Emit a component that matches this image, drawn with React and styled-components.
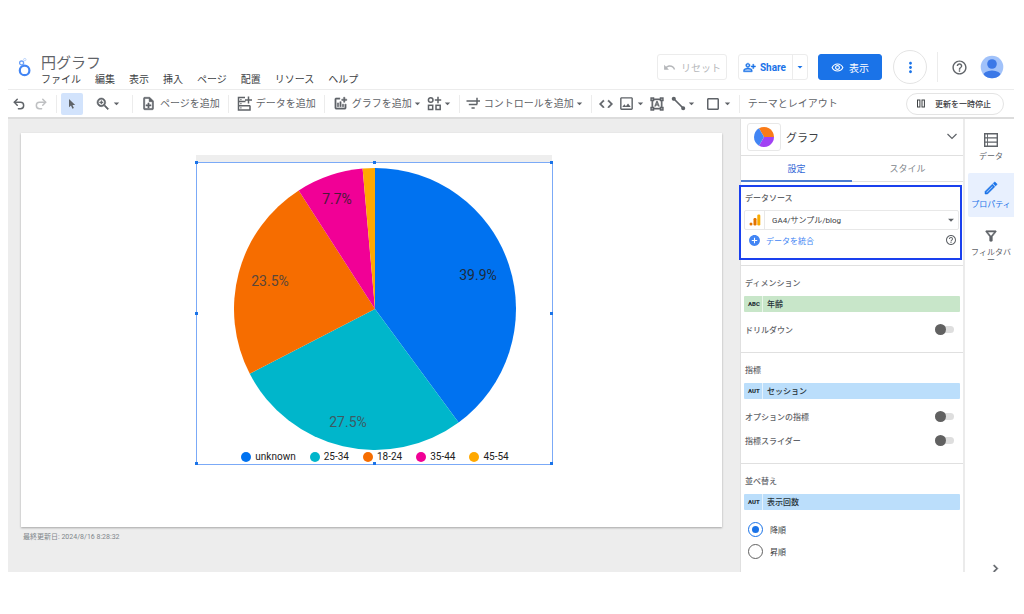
import React, { useState } from 'react'
import styled, { createGlobalStyle } from 'styled-components'
import { Undo2, Redo2 } from 'lucide-react'
import {
  MdAddCircle,
  MdArrowDropDown,
  MdChevronRight,
  MdCode,
  MdCropSquare,
  MdFormatShapes,
  MdHelpOutline,
  MdMoreVert,
  MdOutlineAddchart,
  MdOutlineFilterAlt,
  MdOutlineImage,
  MdOutlineModeEdit,
  MdOutlineNoteAdd,
  MdOutlinePersonAddAlt,
  MdOutlineRemoveRedEye,
  MdUndo,
  MdZoomIn,
} from 'react-icons/md'

const GlobalStyle = createGlobalStyle`
    * {
        box-sizing: border-box;
    }
    body {
        margin: 0;
        background: #fff;
        color: #5f6368;
        font-family: Roboto, "Noto Sans CJK JP", sans-serif;
        font-size: 8px;
    }
    button, select, input {
        margin: 0;
        font-family: inherit;
        color: inherit;
    }
    button {
        padding: 0;
        border: 0;
        background: none;
        cursor: pointer;
    }
    svg {
        display: block;
        flex: none;
    }
    `;

const Page = styled.div`
    padding: 44px 10px 42px 8px;
    `;

/* ---------- header ---------- */

const Header = styled.header`
    display: flex;
    align-items: center;
    height: 46px;
    padding: 1px 10px 0 9px;
    border-bottom: 1px solid #ececec;
    `;

const Brand = styled.div`
    flex: 1;
    margin-left: 9px;
    padding-top: 7px;
    `;

const Title = styled.h1`
    margin: 0;
    font-size: 15px;
    line-height: 19px;
    font-weight: 400;
    `;

const Menu = styled.nav`
    display: flex;
    gap: 14px;
    `;

const MenuLink = styled.a`
    color: #3c4043;
    font-size: 10px;
    line-height: 14px;
    text-decoration: none;
    `;

const HeaderButton = styled.button`
    display: flex;
    align-items: center;
    justify-content: center;
    gap: 5px;
    width: ${props => props.$width};
    height: 26px;
    border: 1px solid ${props => props.$primary ? "#1a73e8" : "#ececec"};
    border-radius: 3px;
    background: ${props => props.$primary ? "#1a73e8" : "white"};
    color: ${props => props.$primary ? "white" : "#b5b7ba"};
    font-size: 10px;
    `;

const ShareGroup = styled.div`
    display: flex;
    height: 26px;
    margin: 0 10px 0 11px;
    border: 1px solid #ececec;
    border-radius: 3px;
    color: #1a73e8;
    `;

const ShareButton = styled.button`
    display: flex;
    align-items: center;
    gap: 4px;
    padding: 0 6px 0 4px;
    font-size: 10px;
    font-weight: 700;
    `;

const ShareMore = styled.button`
    padding: 0 1px;
    border-left: 1px solid #ececec;
    `;

const RoundButton = styled.button`
    display: grid;
    place-items: center;
    width: 34px;
    height: 34px;
    margin: 0 10px 0 11px;
    border: 1px solid #e4e4e4;
    border-radius: 50%;
    color: #1a73e8;
    `;

const HelpButton = styled.button`
    display: grid;
    place-items: center;
    width: 43px;
    height: 30px;
    border-left: 1px solid #ececec;
    `;

/* ---------- toolbar ---------- */

const Toolbar = styled.div`
    display: flex;
    align-items: center;
    height: 29px;
    padding-right: 10px;
    border-bottom: 2px solid #dcdcdc;
    `;

const Tool = styled.button`
    display: flex;
    align-items: center;
    gap: 4px;
    padding: 0 ${props => props.$pad || "2px"};
    font-size: 10px;
    line-height: 20px;
    white-space: nowrap;
    `;

const SquareTool = styled.button`
    display: grid;
    place-items: center;
    width: 22px;
    height: 22px;
    margin-right: ${props => props.$active ? "8px" : "0"};
    border-radius: 2px;
    background: ${props => props.$active ? "#d2e3fc" : "none"};
    opacity: ${props => props.disabled ? 0.4 : 1};
    `;

/* thickens the strokes of a filled icon */
const Bold = styled.span`
    path:not([fill="none"]) {
        stroke: currentColor;
        stroke-width: 0.8px;
    }
    `;

const Sep = styled.span`
    width: 1px;
    height: 18px;
    margin: 0 ${props => props.$tight ? "4px" : "6px"};
    background: #ececec;
    `;

const Caret = styled(MdArrowDropDown)`
    width: 13px;
    height: 13px;
    margin: 0 -1px 0 -5px;
    `;

const PauseButton = styled.button`
    display: flex;
    align-items: center;
    gap: 10px;
    height: 22px;
    margin-left: auto;
    padding: 0 12px 0 10px;
    border: 1px solid #e4e4e4;
    border-radius: 11px;
    color: #3c4043;
    font-size: 8px;
    font-weight: 500;
    `;

/* ---------- canvas ---------- */

const Workspace = styled.div`
    display: flex;
    `;

const Canvas = styled.main`
    flex: 1;
    padding: 14px 18px 0 13px;
    background: #ededed;
    `;

const Sheet = styled.section`
    padding: 22px 0 62px 175px;
    background: white;
    box-shadow: 0 1px 2px rgba(0, 0, 0, 0.3);
    `;

const ChartStrip = styled.div`
    width: 356px;
    height: 7px;
    background: #eee;
    `;

const ChartFrame = styled.figure`
    position: relative;
    display: flex;
    flex-direction: column;
    align-items: center;
    width: 357px;
    height: 303px;
    margin: 0;
    padding: 5px 0 0 1px;
    border: 1px solid #7baaf7;
    `;

const Handle = styled.span`
    position: absolute;
    left: ${props => props.$x};
    top: ${props => props.$y};
    width: 3px;
    height: 3px;
    margin: -2px;
    background: #1a73e8;
    `;

const Legend = styled.ul`
    display: flex;
    gap: 14px;
    margin: 1px 0 0;
    padding: 0;
    list-style: none;
    color: #212121;
    font-size: 10px;
    line-height: 12px;
    `;

const LegendItem = styled.li`
    display: flex;
    align-items: center;
    gap: 4px;
    &::before {
        content: "";
        width: 10px;
        height: 10px;
        border-radius: 50%;
        background: ${props => props.$color};
    }
    `;

const Updated = styled.p`
    margin: 4px 2px 0;
    color: #80868b;
    font-size: 7px;
    line-height: 12px;
    `;

/* ---------- property panel ---------- */

const Panel = styled.aside`
    width: 225px;
    padding-bottom: 10px;
    border-left: 1px solid #e0e0e0;
    border-right: 2px solid #ebebeb;
    `;

const PanelHead = styled.div`
    display: flex;
    align-items: center;
    gap: 5px;
    height: 37px;
    padding: 0 4px 0 6px;
    border-bottom: 1px solid #e0e0e0;
    `;

const ChartType = styled.button`
    display: grid;
    place-items: center;
    width: 34px;
    height: 28px;
    border: 1px solid #e8e8e8;
    border-radius: 3px;
    `;

const PanelTitle = styled.h2`
    flex: 1;
    margin: 0;
    color: #3c4043;
    font-size: 11px;
    font-weight: 400;
    `;

const Tabs = styled.div`
    display: grid;
    grid-template-columns: 1fr 1fr;
    height: 26px;
    border-bottom: 1px solid #e0e0e0;
    `;

const Tab = styled.button`
    height: 26px;
    border-bottom: 2px solid ${props => props.$active ? "#4a7bd0" : "transparent"};
    color: ${props => props.$active ? "#3367d6" : "#80868b"};
    font-size: 9px;
    `;

const SourceBox = styled.section`
    margin: 3px 1px 5px -2px;
    padding: 4px 1px 8px 3px;
    border: 2px solid #1a40ee;
    `;

const Section = styled.section`
    padding: 10px 3px ${props => props.$bottom};
    border-top: 1px solid #e0e0e0;
    `;

const Label = styled.h3`
    margin: 0 1px;
    font-size: 8px;
    line-height: 16px;
    font-weight: 500;
    `;

const SourceRow = styled.div`
    display: flex;
    align-items: center;
    height: 20px;
    margin-top: 3px;
    border: 1px solid #e8e8e8;
    border-radius: 2px;
    `;

const SourceIcon = styled.span`
    display: grid;
    place-items: center;
    width: 20px;
    height: 18px;
    border-right: 1px solid #e8e8e8;
    `;

const SourceSelect = styled.select`
    flex: 1;
    padding: 0 0 0 7px;
    border: 0;
    background: none;
    appearance: none;
    color: #3c4043;
    font-size: 8px;
    `;

const BlendRow = styled.div`
    display: flex;
    align-items: center;
    justify-content: space-between;
    height: 20px;
    padding: 0 2px 0 4px;
    `;

const BlendButton = styled.button`
    display: flex;
    align-items: center;
    gap: 5px;
    color: #4285f4;
    font-size: 8px;
    `;

const Field = styled.div`
    display: flex;
    align-items: center;
    height: 16px;
    margin-top: 4px;
    border-radius: 1px;
    background: ${props => props.$green ? "#c8e6c9" : "#bbdefb"};
    color: #263238;
    font-size: 8px;
    font-weight: 500;
    line-height: 15px;
    `;

const FieldType = styled.span`
    width: 19px;
    margin-right: 4px;
    padding-left: 4px;
    border-right: 1px solid rgba(255, 255, 255, 0.6);
    font-size: 6px;
    font-weight: 900;
    line-height: 16px;
    `;

const ToggleRow = styled.label`
    display: flex;
    align-items: center;
    justify-content: space-between;
    height: 24px;
    padding: 0 6px 0 1px;
    font-weight: 500;
    `;

const Toggle = styled.input`
    display: flex;
    align-items: center;
    width: 19px;
    height: 7px;
    border-radius: 4px;
    background: #dedede;
    appearance: none;
    &::before {
        content: "";
        width: 11px;
        height: 11px;
        border-radius: 50%;
        background: #616161;
    }
    &:checked {
        justify-content: flex-end;
    }
    `;

const Rows = styled.div`
    padding-top: ${props => props.$top || "5px"};
    `;

const RadioRow = styled.label`
    display: flex;
    align-items: center;
    gap: 7px;
    height: 22px;
    padding-left: 4px;
    color: #3c4043;
    `;

const Radio = styled.input`
    display: grid;
    place-items: center;
    width: 15px;
    height: 15px;
    border: 1px solid #616161;
    border-radius: 50%;
    appearance: none;
    &:checked {
        border-color: #1a73e8;
    }
    &:checked::before {
        content: "";
        width: 7px;
        height: 7px;
        border-radius: 50%;
        background: #1a73e8;
    }
    `;

/* ---------- right rail ---------- */

const Rail = styled.nav`
    display: flex;
    flex-direction: column;
    align-items: flex-end;
    width: 49px;
    padding-top: 6px;
    `;

const RailButton = styled.button`
    display: flex;
    flex-direction: column;
    align-items: center;
    gap: 5px;
    width: 46px;
    height: 44px;
    margin-bottom: 4px;
    padding-top: 7px;
    border-radius: 2px 0 0 2px;
    background: ${props => props.$active ? "#e8f0fe" : "none"};
    color: ${props => props.$active ? "#1a73e8" : "#5f6368"};
    font-size: 8px;
    line-height: 8px;
    word-break: break-all;
    `;

const Collapse = styled.button`
    display: grid;
    height: 11px;
    margin: auto 11px 0 0;
    overflow: hidden;
    `;

const Logo = () => (
  <svg width="15" height="20" viewBox="0 0 15 20" fill="none" stroke="#4285f4">
    <circle cx="7.6" cy="13.4" r="4.8" strokeWidth="2.2" />
    <circle cx="4.6" cy="6" r="2" strokeWidth="1.3" stroke="#6ba0f7" />
    <circle cx="7.8" cy="2.6" r="1.2" strokeWidth="0.9" stroke="#b4cffb" />
  </svg>
)

const Avatar = () => (
  <svg width="24" height="24" viewBox="0 0 24 24">
    <clipPath id="face"><circle cx="12" cy="12" r="11.3" /></clipPath>
    <g clipPath="url(#face)">
      <rect width="24" height="24" fill="#a1c2fa" />
      <circle cx="12" cy="9" r="4.8" fill="#3b78e7" />
      <ellipse cx="12" cy="21" rx="9" ry="5.6" fill="#3b78e7" />
    </g>
  </svg>
)

const CursorIcon = () => (
  <svg width="12" height="12" viewBox="0 0 12 12" fill="#5f6368">
    <path d="M3 1v8.2l2-1.7 1.4 3.2 1.5-.7-1.4-3.1h2.7z" />
  </svg>
)

const AddDataIcon = () => (
  <svg width="15" height="15" viewBox="0 0 15 15" fill="none" stroke="currentColor" strokeWidth="1.5">
    <path d="M8 1.500H1.500v12.500h11.500V9.500M1.500 5.600h7M1.500 9.800H13M11.500 .5v7M8 4h7" />
    <path d="M3.300 3.600h1.200M3.300 7.700h1.200M3.300 11.900h1.200" strokeWidth="1.200" />
  </svg>
)

const AddWidgetIcon = () => (
  <svg width="15" height="15" viewBox="0 0 15 15" fill="none" stroke="currentColor" strokeWidth="1.500">
    <circle cx="3.700" cy="4" r="2.300" />
    <path d="M11 .8v6.400M7.800 4h6.400" />
    <rect x="1.500" y="9.300" width="4.200" height="4.200" />
    <rect x="9" y="9.300" width="4.200" height="4.200" />
  </svg>
)

const AddControlIcon = () => (
  <svg width="14" height="14" viewBox="0 0 14 14" fill="none" stroke="currentColor" strokeWidth="1.500">
    <path d="M.5 4h7.500M2.800 7.500h8.500M5.500 11h3.200M11 .8v6.400M8 4h6" />
  </svg>
)

const LineIcon = () => (
  <svg width="15" height="15" viewBox="0 0 15 15" stroke="currentColor" strokeWidth="1.700" fill="currentColor">
    <path d="M3 3l9 9" />
    <circle cx="2.800" cy="2.800" r="1.200" />
    <circle cx="12.200" cy="12.200" r="1.200" />
  </svg>
)

const PauseIcon = () => (
  <svg width="8" height="9" viewBox="0 0 8 9" fill="none" stroke="currentColor">
    <rect x="0.500" y="1" width="2.400" height="7" />
    <rect x="5" y="1" width="2.400" height="7" />
  </svg>
)

const TableIcon = () => (
  <svg width="16" height="16" viewBox="0 0 16 16" fill="none" stroke="currentColor" strokeWidth="1.400">
    <path d="M1.700 1.700h12.600v12.600H1.700zM1.700 5.900h12.600M1.700 10.100h12.600" />
    <path d="M4.500 1.700v12.600" strokeWidth="0.900" />
  </svg>
)

const ExpandIcon = () => (
  <svg width="14" height="14" viewBox="0 0 14 14" fill="none" stroke="currentColor" strokeWidth="1.200">
    <path d="M2.500 4l4.500 4.500L11.500 4" />
  </svg>
)

const PieTypeIcon = () => (
  <svg width="20" height="20" viewBox="-10 -10 20 20">
    <path d="M0 0L-5 -8.660A10 10 0 0 1 10 0z" fill="#fa7b17" />
    <path d="M0 0L10 0A10 10 0 0 1 -5 8.660z" fill="#a142f4" />
    <path d="M0 0L-5 8.660A10 10 0 0 1 -5 -8.660z" fill="#4285f4" />
  </svg>
)

const AnalyticsIcon = () => (
  <svg width="12" height="12" viewBox="0 0 12 12">
    <rect x="8.300" y="0.500" width="3" height="11" rx="1.200" fill="#f9ab00" />
    <rect x="4.500" y="4" width="3" height="7.500" rx="1.200" fill="#e37400" />
    <circle cx="2" cy="10" r="1.500" fill="#e37400" />
  </svg>
)

const menu = ['ファイル', '編集', '表示', '挿入', 'ページ', '配置', 'リソース', 'ヘルプ']

const slices = [
  { name: 'unknown', value: 39.9, color: '#0072f0', x: 244, y: 112, ink: '#1d2b3d' },
  { name: '25-34', value: 27.5, color: '#00b6cb', x: 114, y: 259, ink: '#3d5a63' },
  { name: '18-24', value: 23.5, color: '#f66d00', x: 36, y: 118, ink: '#5a4639' },
  { name: '35-44', value: 7.7, color: '#f10096', x: 103, y: 36, ink: '#4a1a38' },
  { name: '45-54', value: 1.4, color: '#ffa800' },
]

const point = (share) => {
  const angle = (share / 100) * Math.PI * 2
  return `${141 + 141 * Math.sin(angle)} ${141 - 141 * Math.cos(angle)}`
}

const PieChart = () => {
  let start = 0
  const paths = slices.map(slice => {
    const d = `M141 141L${point(start)}A141 141 0 0 1 ${point(start + slice.value)}z`
    start += slice.value
    return <path key={slice.name} d={d} fill={slice.color} />
  })

  return (
    <svg width="282" height="282" viewBox="0 0 282 282" fontSize="14" textAnchor="middle">
      {paths}
      {slices.filter(slice => slice.x).map(slice => (
        <text key={slice.name} x={slice.x} y={slice.y} fill={slice.ink}>{slice.value}%</text>
      ))}
    </svg>
  )
}

const handles = [
  ['0%', '0%'], ['50%', '0%'], ['100%', '0%'],
  ['0%', '50%'], ['100%', '50%'],
  ['0%', '100%'], ['50%', '100%'], ['100%', '100%'],
]

const TopBar = () => (
  <Header>
    <Logo />
    <Brand>
      <Title>円グラフ</Title>
      <Menu>
        {menu.map(item => <MenuLink key={item} href="#">{item}</MenuLink>)}
      </Menu>
    </Brand>
    <HeaderButton $width="70px"><MdUndo size={13} />リセット</HeaderButton>
    <ShareGroup>
      <ShareButton><Bold><MdOutlinePersonAddAlt size={13} /></Bold>Share</ShareButton>
      <ShareMore aria-label="共有オプション"><MdArrowDropDown size={12} /></ShareMore>
    </ShareGroup>
    <HeaderButton $primary $width="64px"><MdOutlineRemoveRedEye size={13} />表示</HeaderButton>
    <RoundButton aria-label="その他"><MdMoreVert size={17} /></RoundButton>
    <HelpButton aria-label="ヘルプ"><MdHelpOutline size={17} /></HelpButton>
    <Avatar />
  </Header>
)

const Tools = () => (
  <Toolbar>
    <SquareTool aria-label="元に戻す"><Undo2 size={14} strokeWidth={2.5} /></SquareTool>
    <SquareTool aria-label="やり直し" disabled><Redo2 size={14} strokeWidth={2.5} /></SquareTool>
    <Sep $tight />
    <SquareTool aria-label="選択" $active><CursorIcon /></SquareTool>
    <Tool aria-label="ズーム" $pad="4px"><Bold><MdZoomIn size={16} /></Bold><Caret /></Tool>
    <Sep />
    <Tool><Bold><MdOutlineNoteAdd size={15} /></Bold>ページを追加</Tool>
    <Sep />
    <Tool><AddDataIcon />データを追加</Tool>
    <Sep />
    <Tool><Bold><MdOutlineAddchart size={15} /></Bold>グラフを追加<Caret /></Tool>
    <Tool aria-label="ビジュアリゼーション"><AddWidgetIcon /><Caret /></Tool>
    <Sep $tight />
    <Tool><AddControlIcon />コントロールを追加<Caret /></Tool>
    <Sep $tight />
    <Tool aria-label="埋め込み"><Bold><MdCode size={16} /></Bold></Tool>
    <Tool aria-label="画像"><MdOutlineImage size={17} /><Caret /></Tool>
    <Tool aria-label="テキスト"><Bold><MdFormatShapes size={14} /></Bold></Tool>
    <Tool aria-label="線" $pad="5px"><LineIcon /><Caret /></Tool>
    <Tool aria-label="図形"><MdCropSquare size={18} /><Caret /></Tool>
    <Sep $tight />
    <Tool $pad="4px">テーマとレイアウト</Tool>
    <PauseButton><PauseIcon />更新を一時停止</PauseButton>
  </Toolbar>
)

const Properties = () => {
  const [tab, setTab] = useState('設定')

  return (
    <Panel>
      <PanelHead>
        <ChartType aria-label="グラフの種類"><PieTypeIcon /></ChartType>
        <PanelTitle>グラフ</PanelTitle>
        <ExpandIcon />
      </PanelHead>
      <Tabs>
        {['設定', 'スタイル'].map(name => (
          <Tab key={name} $active={tab === name} onClick={() => setTab(name)}>{name}</Tab>
        ))}
      </Tabs>
      <SourceBox>
        <Label as="label" htmlFor="source">データソース</Label>
        <SourceRow>
          <SourceIcon><AnalyticsIcon /></SourceIcon>
          <SourceSelect id="source">
            <option>GA4/サンプル/blog</option>
          </SourceSelect>
          <MdArrowDropDown size={14} />
        </SourceRow>
        <BlendRow>
          <BlendButton><MdAddCircle size={13} />データを統合</BlendButton>
          <MdHelpOutline size={12} />
        </BlendRow>
      </SourceBox>
      <Section $bottom="11px">
        <Label>ディメンション</Label>
        <Field $green><FieldType>ABC</FieldType>年齢</Field>
        <Rows>
          <ToggleRow>ドリルダウン<Toggle type="checkbox" /></ToggleRow>
        </Rows>
      </Section>
      <Section $bottom="11px">
        <Label>指標</Label>
        <Field><FieldType>AUT</FieldType>セッション</Field>
        <Rows>
          <ToggleRow>オプションの指標<Toggle type="checkbox" /></ToggleRow>
          <ToggleRow>指標スライダー<Toggle type="checkbox" /></ToggleRow>
        </Rows>
      </Section>
      <Section $bottom="0">
        <Label>並べ替え</Label>
        <Field><FieldType>AUT</FieldType>表示回数</Field>
        <Rows $top="8px">
          <RadioRow><Radio type="radio" name="order" defaultChecked />降順</RadioRow>
          <RadioRow><Radio type="radio" name="order" />昇順</RadioRow>
        </Rows>
      </Section>
    </Panel>
  )
}

export default function App() {
  return (
    <Page>
      <GlobalStyle />
      <TopBar />
      <Tools />
      <Workspace>
        <Canvas>
          <Sheet>
            <ChartStrip />
            <ChartFrame>
              <PieChart />
              <Legend>
                {slices.map(slice => (
                  <LegendItem key={slice.name} $color={slice.color}>{slice.name}</LegendItem>
                ))}
              </Legend>
              {handles.map(([x, y]) => <Handle key={x + y} $x={x} $y={y} />)}
            </ChartFrame>
          </Sheet>
          <Updated>最終更新日: 2024/8/16 8:28:32</Updated>
        </Canvas>
        <Properties />
        <Rail>
          <RailButton><TableIcon />データ</RailButton>
          <RailButton $active><Bold><MdOutlineModeEdit size={16} /></Bold>プロパティ</RailButton>
          <RailButton><Bold><MdOutlineFilterAlt size={16} /></Bold>フィルタバー</RailButton>
          <Collapse aria-label="閉じる"><Bold><MdChevronRight size={15} /></Bold></Collapse>
        </Rail>
      </Workspace>
    </Page>
  )
}
